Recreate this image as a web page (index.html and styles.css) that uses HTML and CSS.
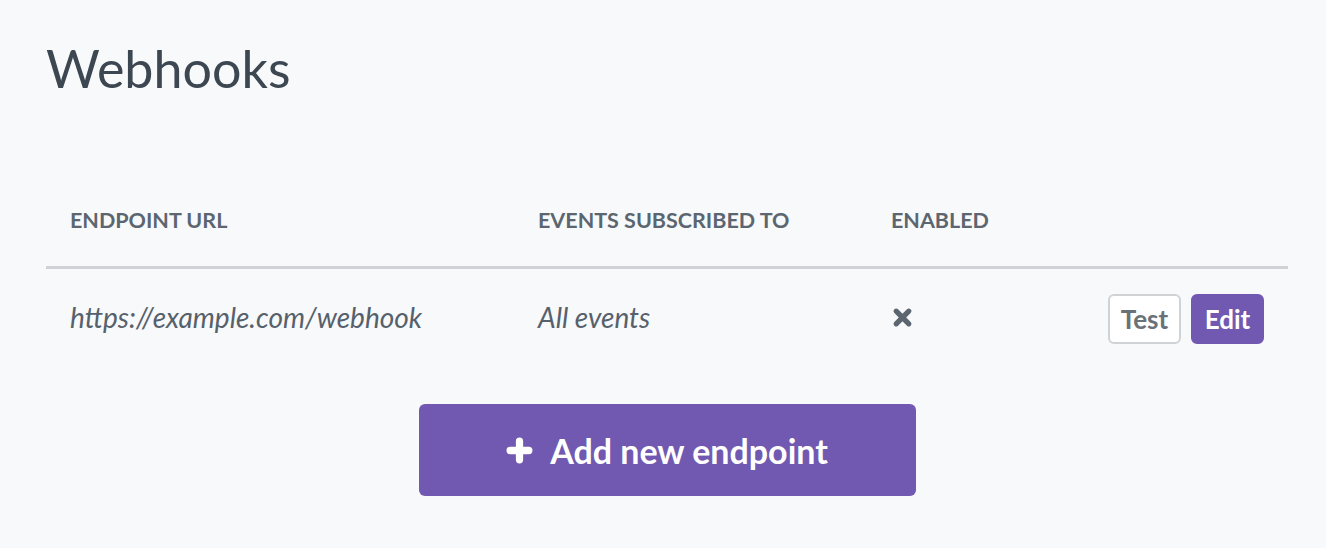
FILE: index.html
```html
<!DOCTYPE html>
<html lang="en">
<head>
<meta charset="utf-8">
<title>Webhooks</title>
<link rel="stylesheet" href="styles.css">
</head>
<body>
<main class="page">
  <h1 class="title">Webhooks</h1>
  <div class="table">
    <div class="row head">
      <div class="cell">Endpoint URL</div>
      <div class="cell">Events subscribed to</div>
      <div class="cell">Enabled</div>
      <div class="cell"></div>
    </div>
    <div class="row body">
      <div class="cell em">https://example.com/webhook</div>
      <div class="cell em">All events</div>
      <div class="cell">
        <svg class="xicon" viewBox="0 0 20 20" aria-label="disabled"><path d="M4 4 L16 16 M16 4 L4 16" stroke="currentColor" stroke-width="5" stroke-linecap="round"/></svg>
      </div>
      <div class="cell actions">
        <button class="btn btn-light">Test</button>
        <button class="btn btn-primary">Edit</button>
      </div>
    </div>
  </div>
  <div class="add-wrap">
    <button class="add-btn">
      <svg class="plus" viewBox="0 0 26 26"><path d="M13 4 V22 M4 13 H22" stroke="currentColor" stroke-width="7" stroke-linecap="round"/></svg>
      <span>Add new endpoint</span>
    </button>
  </div>
</main>
</body>
</html>
```

FILE: styles.css
```css
html, body {
  margin: 0;
  padding: 0;
  background: #f8f9fa;
}
body {
  font-family: "Lato", "Liberation Sans", sans-serif;
  color: #495057;
}
.page {
  padding: 28px 38px 0 46px;
}
.title {
  margin: 0;
  font-size: 52px;
  font-weight: 400;
  color: #3d4752;
  line-height: 80px;
}
.table {
  margin-top: 72px;
}
.row {
  display: grid;
  grid-template-columns: 468px 353px 1fr auto;
  align-items: center;
}
.cell {
  padding: 0 24px;
}
.head {
  height: 89px;
  padding-bottom: 6px;
  box-sizing: border-box;
  border-bottom: 3px solid #cfd3d8;
  font-weight: 700;
  font-size: 21.5px;
  text-transform: uppercase;
  color: #5b6670;
}
.body {
  height: 96px;
  font-size: 28px;
  color: #56616c;
}
.em {
  font-style: italic;
}
.xicon {
  display: block;
  width: 21px;
  height: 21px;
  margin-left: 1px;
  color: #5b6670;
}
.actions {
  display: flex;
  gap: 10px;
  padding-top: 4px;
}
.btn {
  font-family: inherit;
  font-weight: 700;
  font-size: 26px;
  height: 50px;
  width: 73px;
  border-radius: 6px;
  padding: 0;
  cursor: pointer;
}
.btn-light {
  background: #fff;
  border: 2px solid #d0d3d6;
  color: #6a7279;
}
.btn-primary {
  background: #7159b1;
  border: 2px solid #7159b1;
  color: #fff;
}
.add-wrap {
  display: flex;
  justify-content: center;
  margin-top: 39px;
}
.add-btn {
  width: 497px;
  height: 92px;
  border: none;
  border-radius: 6px;
  background: #7159b1;
  color: #fff;
  font-family: inherit;
  font-weight: 700;
  font-size: 34px;
  display: flex;
  align-items: center;
  justify-content: center;
  gap: 17px;
  cursor: pointer;
}
.plus {
  width: 27px;
  height: 27px;
}
```
